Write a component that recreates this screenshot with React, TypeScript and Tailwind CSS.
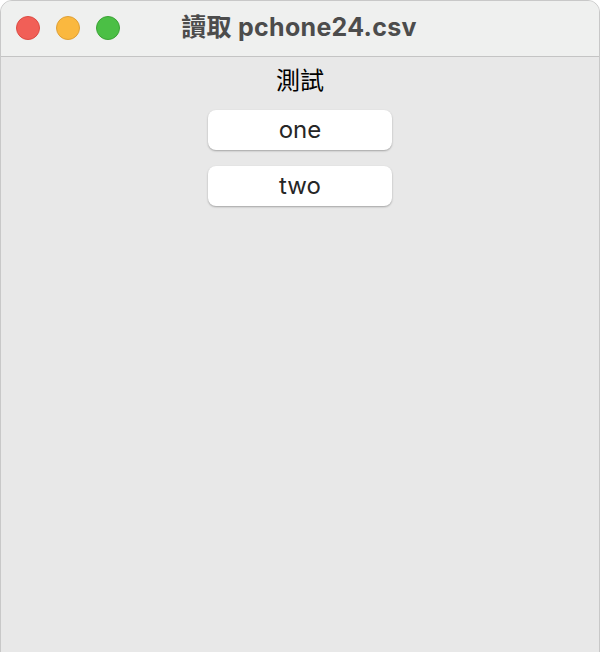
export default function App() {
  const font = { fontFamily: '"Helvetica Neue", Inter, "Noto Sans CJK TC", sans-serif' };
  return (
    <div className="h-[652px] w-[600px] overflow-hidden bg-white" style={font}>
      <div className="flex h-[664px] w-[600px] flex-col overflow-hidden rounded-[12px] border border-[#c8c8c8] bg-[#e8e8e8]">
        <div className="relative flex h-[56px] shrink-0 items-center justify-center border-b border-[#c4c4c4] bg-[#eff0ef]">
          <div className="absolute left-[15px] top-[15px] flex gap-[16px]">
            <span className="h-[24px] w-[24px] rounded-full border border-[#dd4b43] bg-[#f15f57]" />
            <span className="h-[24px] w-[24px] rounded-full border border-[#dfa036] bg-[#fab83f]" />
            <span className="h-[24px] w-[24px] rounded-full border border-[#3ba335] bg-[#4bbf45]" />
          </div>
          <span className="ml-[-2px] mt-[-1px] text-[25px] font-bold tracking-[0.3px] text-[#4c4c4c]">讀取 pchone24.csv</span>
        </div>
        <div className="flex flex-col items-center pt-[5px]">
          <span className="text-[24px] leading-[38px] text-black">測試</span>
          <div className="mt-[10px] flex flex-col gap-[16px]">
            <button className="h-[40px] w-[184px] rounded-[8px] bg-white text-[24px] text-[#262626] shadow-[0_1px_2px_rgba(0,0,0,0.3)]">
              one
            </button>
            <button className="h-[40px] w-[184px] rounded-[8px] bg-white text-[24px] text-[#262626] shadow-[0_1px_2px_rgba(0,0,0,0.3)]">
              two
            </button>
          </div>
        </div>
      </div>
    </div>
  );
}
